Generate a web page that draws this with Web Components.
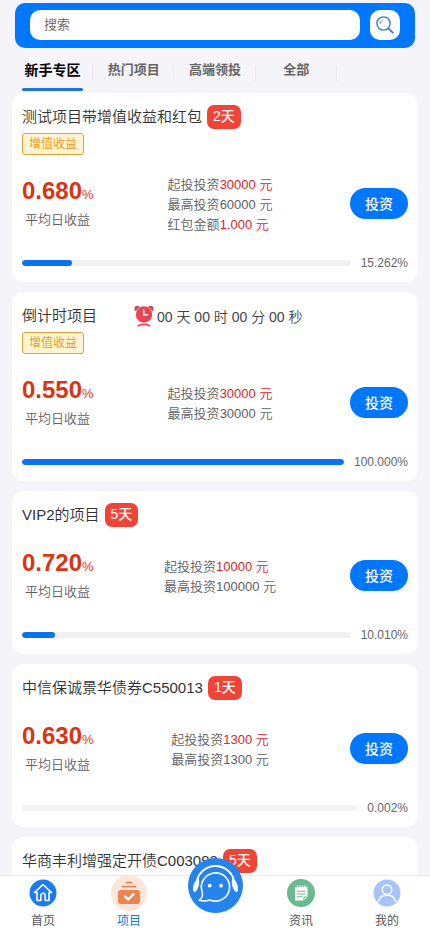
<!DOCTYPE html>
<html lang="zh-CN">
<head>
<meta charset="utf-8">
<meta name="viewport" content="width=device-width, initial-scale=1">
<title>项目</title>
<style>
html,body{height:100%}
body{margin:0;background:#f5f4f8;color:#333;font-family:"Liberation Sans","Noto Sans CJK SC",sans-serif;font-size:13px;font-weight:350}
</style>
</head>
<body>
<app-shell>
  <search-bar slot="top"></search-bar>
  <tab-strip slot="top">
    <tab-link active>新手专区</tab-link>
    <tab-link>热门项目</tab-link>
    <tab-link>高端领投</tab-link>
    <tab-link>全部</tab-link>
  </tab-strip>

  <project-card rate="0.680" progress="15.262">
    测试项目带增值收益和红包
    <day-badge slot="badge">2天</day-badge>
    <bonus-tag slot="tag">增值收益</bonus-tag>
    <amount-line slot="detail" hot value="30000 元">起投投资</amount-line>
    <amount-line slot="detail" value="60000 元">最高投资</amount-line>
    <amount-line slot="detail" hot value="1.000 元">红包金额</amount-line>
  </project-card>

  <project-card rate="0.550" progress="100.000">
    倒计时项目
    <count-down slot="badge">00 天 00 时 00 分 00 秒</count-down>
    <bonus-tag slot="tag">增值收益</bonus-tag>
    <amount-line slot="detail" hot value="30000 元">起投投资</amount-line>
    <amount-line slot="detail" value="30000 元">最高投资</amount-line>
  </project-card>

  <project-card rate="0.720" progress="10.010">
    VIP2的项目
    <day-badge slot="badge">5天</day-badge>
    <amount-line slot="detail" hot value="10000 元">起投投资</amount-line>
    <amount-line slot="detail" value="100000 元">最高投资</amount-line>
  </project-card>

  <project-card rate="0.630" progress="0.002">
    中信保诚景华债券C550013
    <day-badge slot="badge">1天</day-badge>
    <amount-line slot="detail" hot value="1300 元">起投投资</amount-line>
    <amount-line slot="detail" value="1300 元">最高投资</amount-line>
  </project-card>

  <project-card>
    华商丰利增强定开债C003093
    <day-badge slot="badge">5天</day-badge>
  </project-card>

  <nav-bar slot="bottom">
    <nav-item label="首页">
      <svg width="28" height="28" viewBox="0 0 28 28"><circle cx="14" cy="14" r="13.5" fill="#1b7cf0"/><path d="M5.500 13.500 14 5.500l8.500 8H20V21.500H16.200V16.500a2.200 2.200 0 0 0-4.400 0V21.500H8V13.500Z" fill="none" stroke="#fff" stroke-width="1.600" stroke-linejoin="round"/></svg>
    </nav-item>
    <nav-item label="项目" active>
      <svg width="36" height="36" viewBox="0 0 36 36"><circle cx="18" cy="18" r="18" fill="#fce6da"/><path d="M15.500 7.700h5M11.500 11.700h13" stroke="#ec8453" stroke-width="1.800" stroke-linecap="round"/><rect x="7" y="15" width="22" height="14" rx="2.500" fill="#ec8453"/><path d="m14 21.300 3.200 3.200 5.400-5.400" fill="none" stroke="#fff" stroke-width="2.200" stroke-linecap="round" stroke-linejoin="round"/></svg>
    </nav-item>
    <nav-item name="客服" raised>
      <svg width="55" height="55" viewBox="0 0 55 55"><circle cx="27.500" cy="27.500" r="27.500" fill="#2583ee"/><path d="M9.200 21.500A19.200 19.200 0 0 1 45.800 21.500" fill="none" stroke="#fff" stroke-width="2"/><path d="M10.800 19.500C7 22 4.500 27.500 5 32.500c.3 1.600 2 1.600 3.200.4C10.700 30 11.800 25 10.800 19.500Z" fill="#fff"/><path d="M44.200 19.500c3.800 2.500 6.300 8 5.800 13-.3 1.600-2 1.600-3.200 .4C44.300 30 43.200 25 44.200 19.500Z" fill="#fff"/><path d="M14.300 34A14.100 14.100 0 1 1 21.800 41.900C18.500 43.200 14.800 43.300 11.200 42.300 14 40.300 15 37.300 14.300 34Z" fill="none" stroke="#fff" stroke-width="1.600" stroke-linejoin="round"/><circle cx="21.700" cy="27.700" r="1.900" fill="#fff"/><circle cx="33" cy="27.700" r="1.900" fill="#fff"/></svg>
    </nav-item>
    <nav-item label="资讯">
      <svg width="28" height="28" viewBox="0 0 28 28"><circle cx="14" cy="14" r="14" fill="#6ab98f"/><path d="M8 8h12.500v10l-3.500 3.500H8Z" fill="#fff"/><path d="M10.500 6.500v3M13 6.500v3M15.500 6.500v3M18 6.500v3" stroke="#fff" stroke-width="1.200"/><path d="M10 12.200h8.500M10 15h8.500M10 17.800h5.500M17 21.500V18h3.500" fill="none" stroke="#6ab98f" stroke-width="1.100"/></svg>
    </nav-item>
    <nav-item label="我的">
      <svg width="28" height="28" viewBox="0 0 28 28"><circle cx="14" cy="14" r="13.500" fill="#a6c5f6"/><circle cx="14" cy="10.700" r="4.800" fill="none" stroke="#fff" stroke-width="1.500"/><path d="M5.500 22.500c1-4.300 4-6.600 8.500-6.600s7.500 2.300 8.500 6.600" fill="none" stroke="#fff" stroke-width="1.500" stroke-linecap="round"/></svg>
    </nav-item>
  </nav-bar>
</app-shell>

<script>
class Base extends HTMLElement {
  constructor() {
    super();
    this.attachShadow({ mode: "open" });
  }
  connectedCallback() {
    this.shadowRoot.innerHTML = this.view();
  }
  attr(name) { return this.getAttribute(name) || ""; }
}

customElements.define("app-shell", class extends Base {
  view() {
    return `<style>
      :host{display:flex;flex-direction:column;height:100vh}
      main{flex:1;min-height:0;overflow:hidden;display:flex;flex-direction:column;gap:10px;padding:2px 12px 0}
      ::slotted(project-card){flex:none}
    </style>
    <slot name="top"></slot><main><slot></slot></main><slot name="bottom"></slot>`;
  }
});

customElements.define("search-bar", class extends Base {
  view() {
    return `<style>
      :host{display:block;padding:3px 15px 0}
      form{display:flex;gap:10px;padding:7px 15px 8px;background:#0077ff;border-radius:10px;margin:0}
      input{flex:1;min-width:0;height:30px;box-sizing:border-box;border:0;border-radius:10px;background:#fff;padding:0 14px 2px;font:inherit;color:#333;outline:0}
      input::placeholder{color:#666;opacity:1}
      button{width:30px;height:30px;padding:0;border:0;border-radius:10px;background:#fff;display:grid;place-items:center}
    </style>
    <form role="search">
      <input type="text" placeholder="搜索" aria-label="搜索">
      <button type="button" aria-label="搜索"><svg width="20" height="20" viewBox="0 0 20 20" fill="none" stroke="#2a78d6" stroke-linecap="round"><circle cx="8.500" cy="8.500" r="6.600" stroke-width="1.300"/><path d="M5 8.500A3.500 3.500 0 0 1 7 5.500" stroke-width="1"/><path d="m13.300 13.300 4.700 4.500" stroke-width="1.600"/></svg></button>
    </form>`;
  }
});

customElements.define("tab-strip", class extends Base {
  view() {
    return `<style>
      :host{display:block;padding:0 12px}
      nav{display:grid;grid-template-columns:repeat(5,1fr)}
    </style><nav><slot></slot></nav>`;
  }
});

customElements.define("tab-link", class extends Base {
  view() {
    return `<style>
      :host{display:block;padding:0 10px;background:linear-gradient(#e9e9ee,#e9e9ee) right 17px/1px 16px no-repeat}
      a{display:block;height:40px;line-height:43px;text-align:center;white-space:nowrap;font-size:13px;font-weight:700;color:#666;text-decoration:none;border-bottom:3px solid transparent}
      :host([active]) a{font-size:14px;line-height:44px;color:#000}
      i{display:block;height:3px;margin-top:-3px;border-radius:2px}
      :host([active]) i{background:#1f72d8}
    </style><a href="#"><slot></slot></a><i></i>`;
  }
});

customElements.define("day-badge", class extends Base {
  view() {
    return `<style>
      :host{display:block;margin-left:5px;padding:0 6px;height:24px;line-height:23px;border-radius:7px;background:#f04438;color:#fff;font-size:14px;font-weight:500}
    </style><slot></slot>`;
  }
});

customElements.define("bonus-tag", class extends Base {
  view() {
    return `<style>
      :host{display:block;width:max-content;margin:2px 0;padding:0 6px;height:20px;line-height:20px;border:1px solid #e2a233;border-radius:3px;background:#fff4d4;color:#e8960c;font-size:12px}
    </style><slot></slot>`;
  }
});

customElements.define("count-down", class extends Base {
  view() {
    return `<style>
      :host{display:flex;align-items:center;gap:3px;margin-left:37px;font-size:14px;color:#444}
    </style>
    <svg width="20" height="22" viewBox="0 0 20 22"><circle cx="3.300" cy="3.600" r="2.900" fill="#b8525c"/><circle cx="16.700" cy="3.600" r="2.900" fill="#b8525c"/><circle cx="10" cy="9.500" r="8.600" fill="#fff"/><circle cx="10" cy="9.500" r="8.200" fill="#ea4450"/><path d="M9.800 4.800v5h4" fill="none" stroke="#fff" stroke-width="1.500"/><path d="M4.500 20.800c3-1.800 8-1.800 11 0" fill="none" stroke="#ea4450" stroke-width="1.800" stroke-linecap="round"/></svg>
    <time><slot></slot></time>`;
  }
});

customElements.define("amount-line", class extends Base {
  view() {
    return `<style>
      :host{display:block;line-height:20px;white-space:nowrap;font-size:13px;color:#606060}
      :host([hot]) span{color:#d8242a}
    </style><slot></slot><span>${this.attr("value")}</span>`;
  }
});

customElements.define("project-card", class extends Base {
  view() {
    const progress = this.attr("progress");
    const body = this.hasAttribute("rate") ? `
      <div class="stats">
        <div class="rate"><p><b>${this.attr("rate")}</b><small>%</small></p><p class="cap">平均日收益</p></div>
        <div class="detail"><slot name="detail"></slot></div>
        <button type="button">投资</button>
      </div>
      <div class="progress">
        <div class="track" role="progressbar" aria-label="进度" aria-valuenow="${progress}"><div style="width:${progress}%"></div></div>
        <span>${progress}%</span>
      </div>` : "";
    return `<style>
      :host{display:block;box-sizing:border-box;min-height:60px;padding:10px 10px 9px;border-radius:12px;background:#fff}
      header{display:flex;align-items:center;height:28px}
      h2{margin:0;font-size:15px;font-weight:inherit;line-height:28px;white-space:nowrap;color:#333}
      p{margin:0;white-space:nowrap}
      .stats{display:grid;grid-template-columns:68px 1fr 58px;align-items:center;height:96px}
      .rate{display:grid;gap:2px;padding-bottom:2px;color:#db3413}
      .rate p{line-height:26px}
      b{font-size:24px;font-weight:700}
      small{font-size:13px;font-weight:400}
      .rate .cap{padding-left:3px;line-height:20px;font-size:13px;color:#606060}
      .detail{justify-self:center}
      button{height:31px;margin-bottom:4px;padding:0;border:0;border-radius:16px;background:#0077ff;color:#fff;font-family:inherit;font-size:14px;font-weight:500}
      .progress{display:flex;align-items:center;gap:10px;height:20px;font-size:12px;color:#666}
      .track{flex:1;height:6px;border-radius:3px;background:#f1f1f4;overflow:hidden}
      .track div{height:6px;border-radius:3px;background:#0a72ee}
    </style>
    <header><h2><slot></slot></h2><slot name="badge"></slot></header>
    <slot name="tag"></slot>${body}`;
  }
});

customElements.define("nav-bar", class extends Base {
  view() {
    return `<style>
      :host{display:block;position:relative;z-index:1;background:#fff;border-top:1px solid #e8e8ea}
      nav{display:grid;grid-template-columns:repeat(5,1fr);height:56px}
    </style><nav><slot></slot></nav>`;
  }
});

customElements.define("nav-item", class extends Base {
  view() {
    return `<style>
      :host{display:block}
      a{display:flex;flex-direction:column;align-items:center;text-decoration:none;color:#555;font-size:12px;font-weight:400}
      .icon{display:flex;align-items:center;justify-content:center;height:34px}
      :host([active]) a{color:#1677e0}
      :host([raised]) .icon{height:55px;margin-top:-18px}
      span{line-height:22px}
      span:empty{display:none}
    </style><a href="#" aria-label="${this.attr("label") || this.attr("name")}"><div class="icon"><slot></slot></div><span>${this.attr("label")}</span></a>`;
  }
});
</script>
</body>
</html>
